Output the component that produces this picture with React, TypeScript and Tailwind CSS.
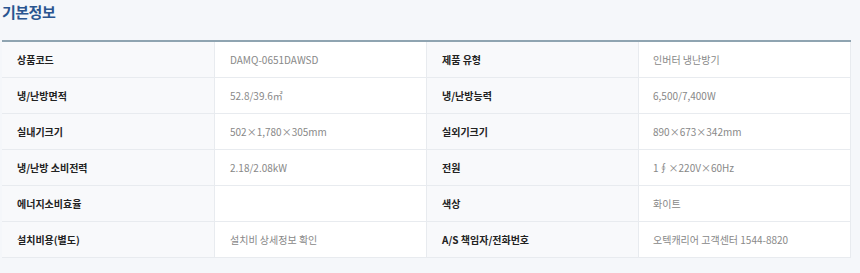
import React from "react";

const rows: [string, string, string, string][] = [
  ["상품코드", "DAMQ-0651DAWSD", "제품 유형", "인버터 냉난방기"],
  ["냉/난방면적", "52.8/39.6㎡", "냉/난방능력", "6,500/7,400W"],
  ["실내기크기", "502×1,780×305mm", "실외기크기", "890×673×342mm"],
  ["냉/난방 소비전력", "2.18/2.08kW", "전원", "1∮×220V×60Hz"],
  ["에너지소비효율", "", "색상", "화이트"],
  ["설치비용(별도)", "설치비 상세정보 확인", "A/S 책임자/전화번호", "오텍캐리어 고객센터 1544-8820"],
];

export default function App() {
  return (
    <div
      className="w-[860px] h-[273px] bg-[#f5f7fa] overflow-hidden"
      style={{ fontFamily: '"Noto Sans CJK KR", "Noto Sans", sans-serif' }}
    >
      <div className="h-[40px] pl-[2px] pt-[1px]">
        <h2 className="text-[15px] leading-[22px] font-bold text-[#2a5590] tracking-[-0.5px]">기본정보</h2>
      </div>
      <div className="ml-[2px] w-[849px] border-t-2 border-[#8fa4b1]">
        {rows.map((r, i) => (
          <div
            key={i}
            className="grid grid-cols-[213px_212px_212px_212px] h-[36px] border-b border-[#e8ebef]"
          >
            <div className="bg-[#f8f9fb] border-r border-[#e8ebef] flex items-center pl-[15px] text-[10px] font-bold text-[#222]">
              {r[0]}
            </div>
            <div className="bg-white border-r border-[#e8ebef] flex items-center pl-[15px] text-[10px] text-[#888]">
              {r[1]}
            </div>
            <div className="bg-[#f8f9fb] border-r border-[#e8ebef] flex items-center pl-[15px] text-[10px] font-bold text-[#222]">
              {r[2]}
            </div>
            <div className="bg-white border-r border-[#e8ebef] flex items-center pl-[14px] text-[10px] text-[#888]">
              {r[3]}
            </div>
          </div>
        ))}
      </div>
    </div>
  );
}
